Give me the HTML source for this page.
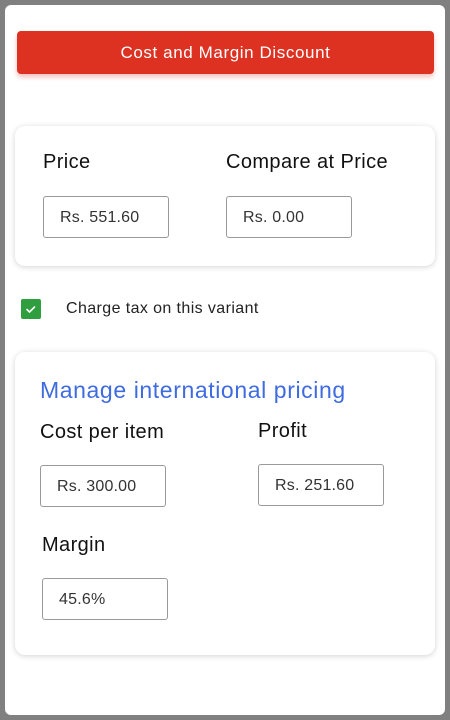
<!DOCTYPE html>
<html><head><style>
*{box-sizing:border-box;margin:0;padding:0}
body{width:450px;height:720px;background:#808080;font-family:"Liberation Sans",sans-serif;position:relative;overflow:hidden}
.panel{position:absolute;left:5px;top:5px;width:440px;height:710px;background:#fff;border-radius:6px}
.abs{position:absolute}
.btn{left:17px;top:31px;width:417px;height:43px;background:#dd3122;border-radius:4px;color:#fff;font-size:17px;text-align:center;line-height:44px;box-shadow:0 3px 5px rgba(221,49,34,.3);letter-spacing:.6px}
.card{left:15px;width:420px;background:#fff;border-radius:10px;box-shadow:0 1px 6px rgba(0,0,0,.18)}
.lbl{font-size:20px;color:#111;letter-spacing:.4px}
.inp{width:126px;height:42px;border:1px solid #999;border-radius:3px;font-size:16px;color:#333;padding-left:16px;line-height:42px;letter-spacing:.2px}
</style></head><body>
<div class="panel"></div>
<div class="abs btn">Cost and Margin Discount</div>
<div class="abs card" style="top:126px;height:140px"></div>
<div class="abs lbl" style="left:43px;top:151px">Price</div>
<div class="abs lbl" style="left:226px;top:151px">Compare at Price</div>
<div class="abs inp" style="left:43px;top:196px">Rs. 551.60</div>
<div class="abs inp" style="left:226px;top:196px">Rs. 0.00</div>
<div class="abs" style="left:21px;top:299px;width:20px;height:20px;background:#2f9e3f;border-radius:2px">
<svg width="20" height="20" viewBox="0 0 20 20"><path d="M6 10.5l2.5 2.5 5-5" fill="none" stroke="#fff" stroke-width="1.6" stroke-linecap="round" stroke-linejoin="round"/></svg></div>
<div class="abs" style="left:66px;top:300px;font-size:16px;color:#222;letter-spacing:.4px">Charge tax on this variant</div>
<div class="abs card" style="top:352px;height:303px"></div>
<div class="abs" style="left:40px;top:377px;font-size:23px;color:#3e6be0;letter-spacing:.6px">Manage international pricing</div>
<div class="abs lbl" style="left:40px;top:421px">Cost per item</div>
<div class="abs lbl" style="left:258px;top:420px">Profit</div>
<div class="abs inp" style="left:40px;top:465px">Rs. 300.00</div>
<div class="abs inp" style="left:258px;top:464px">Rs. 251.60</div>
<div class="abs lbl" style="left:42px;top:534px">Margin</div>
<div class="abs inp" style="left:42px;top:578px">45.6%</div>
</body></html>
